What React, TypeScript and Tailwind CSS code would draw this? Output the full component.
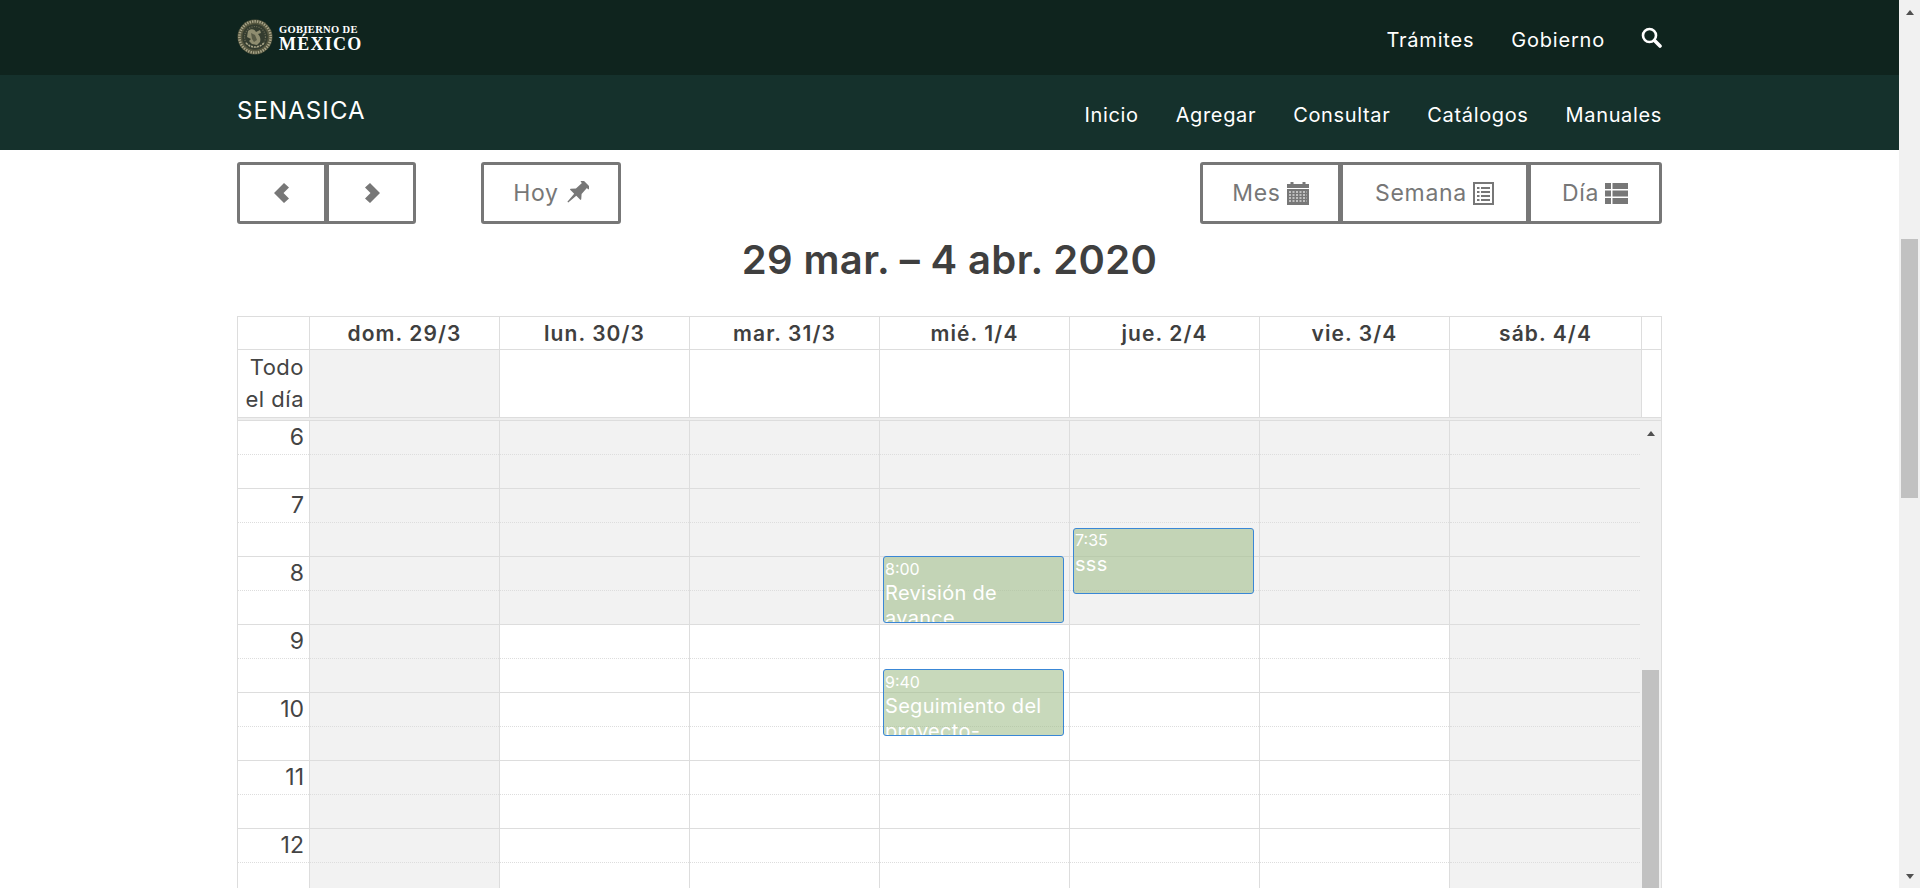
const font = "font-['Inter','Liberation_Sans',sans-serif]";

const hours = ["6", "7", "8", "9", "10", "11", "12"];
const days = ["dom. 29/3", "lun. 30/3", "mar. 31/3", "mié. 1/4", "jue. 2/4", "vie. 3/4", "sáb. 4/4"];

function Emblem() {
  return (
    <svg width="36" height="36" viewBox="0 0 36 36">
      <circle cx="18" cy="18" r="17.5" fill="#55563f" />
      <circle cx="18" cy="18" r="15.6" fill="none" stroke="#a8a488" strokeWidth="2.6" strokeDasharray="1.4 1.1" />
      <circle cx="18" cy="18" r="12.8" fill="#343c2f" />
      <circle cx="18" cy="18" r="10.5" fill="none" stroke="#6f6f58" strokeWidth="1.2" strokeDasharray="1 1.4" />
      <path d="M11 12c3-3 7-2 8 1l4-2 1 3-3 1c2 2 3 5 2 8l-3 3-5-1-3-3 2-2-4-2z" fill="#8f8d70" />
      <path d="M14 14l4 2 2 5-3 2-2-3z" fill="#5a5c47" />
      <path d="M9 24c3 3 6 4 9 4s6-1 9-4" fill="none" stroke="#a8a488" strokeWidth="1.6" strokeDasharray="2 1" />
    </svg>
  );
}

function Chevron({ left }: { left?: boolean }) {
  return (
    <svg width="15" height="20" viewBox="0 0 15 20" fill="#777777" className={left ? "mr-[2px]" : "ml-[2px]"}>
      {left ? <path d="M10 0 L15 4.5 L9.5 10 L15 15.5 L10 20 L0 10 Z" /> : <path d="M5 0 L0 4.5 L5.5 10 L0 15.5 L5 20 L15 10 Z" />}
    </svg>
  );
}

function Pin() {
  return (
    <svg width="24" height="24" viewBox="0 0 24 24" fill="#777777">
      <g transform="rotate(45 12 12)">
        <path d="M6.5 -1.5h11v3h-2l0.5 8 3.5 4v1h-6l-0.9 10.5h-1.2L10.5 14.5h-6v-1l3.5-4 0.5-8h-2z" />
      </g>
    </svg>
  );
}

function Calendar() {
  return (
    <svg width="22" height="23" viewBox="0 0 22 23">
      <path d="M0 2h3.5V0h3v2h9V0h3v2H22v4H0z" fill="#777777" />
      <rect y="7" width="22" height="16" fill="#777777" />
      <path d="M2 10h18M2 13h18M2 16h18M2 19h18" stroke="#d8d8d8" strokeWidth="1.4" strokeDasharray="2 1.5" />
    </svg>
  );
}

function ListAlt() {
  return (
    <svg width="21" height="23" viewBox="0 0 21 23">
      <rect x="1" y="1" width="19" height="21" fill="#fff" stroke="#777777" strokeWidth="2" />
      <path d="M4 6h2.5M8 6h9M4 10h2.5M8 10h9M4 14h2.5M8 14h9M4 18h2.5M8 18h9" stroke="#777777" strokeWidth="2" />
    </svg>
  );
}

function ThList() {
  return (
    <svg width="23" height="21" viewBox="0 0 23 21" fill="#777777">
      <path d="M0 0h6v6H0zM7.5 0H23v6H7.5zM0 7.5h6v6H0zM7.5 7.5H23v6H7.5zM0 15h6v6H0zM7.5 15H23v6H7.5z" />
    </svg>
  );
}

function Search() {
  return (
    <svg width="21" height="21" viewBox="0 0 21 21" fill="none" stroke="#ffffff">
      <circle cx="8.5" cy="8.5" r="6.5" strokeWidth="2.6" />
      <path d="M13.5 13.5l5.5 5.5" strokeWidth="3.6" strokeLinecap="round" />
    </svg>
  );
}

function Event({ time, title, className }: { time: string; title: string; className: string }) {
  return (
    <div className={`absolute overflow-hidden rounded-[3px] border border-[#3a87d6] bg-[#a3bf8e]/60 px-[1px] text-white ${className}`}>
      <div className="text-[16px] leading-[23px]">{time}</div>
      <div className="text-[20px] leading-[25px] tracking-[0.3px]">{title}</div>
    </div>
  );
}

function Topbar() {
  return (
    <div className="h-[75px] bg-[#0f241e] flex items-center justify-between pl-[237px] pr-[237px]">
      <div className="flex items-center gap-[6px] mt-[-1px]">
        <Emblem />
        <div className="font-['Liberation_Serif',serif] font-bold text-white">
          <div className="text-[10.5px] leading-[11px] tracking-[0.35px]">GOBIERNO DE</div>
          <div className="text-[18px] leading-[13px] mt-[3px] tracking-[1.25px]">MÉXICO</div>
        </div>
      </div>
      <div className="flex items-center gap-[37px] text-[20px] text-white">
        <span className="tracking-[0.8px] mt-[4px]">Trámites</span>
        <span className="tracking-[0.8px] mt-[4px]">Gobierno</span>
        <span className="ml-[-1px] mt-[0px]"><Search /></span>
      </div>
    </div>
  );
}

function Navbar() {
  return (
    <div className="h-[75px] bg-[#15312c] flex justify-between pl-[237px] pr-[237px] text-white">
      <span className="text-[24px] leading-[72px] tracking-[1.1px]">SENASICA</span>
      <div className="flex gap-[37px] text-[20px] leading-[80px] tracking-[0.65px]">
        <span>Inicio</span>
        <span>Agregar</span>
        <span>Consultar</span>
        <span>Catálogos</span>
        <span>Manuales</span>
      </div>
    </div>
  );
}

const btn = "flex items-center justify-center gap-[6px] h-[62px] bg-white border-[3px] border-[#777777] text-[23px] tracking-[0.7px] text-[#777777]";

function Toolbar() {
  return (
    <div className="flex justify-between h-[62px] mt-[12px]">
      <div className="flex">
        <div className="flex">
          <div className={`${btn} w-[90px] rounded-l-[3px]`}><Chevron left /></div>
          <div className={`${btn} w-[90px] ml-[-1px] rounded-r-[3px]`}><Chevron /></div>
        </div>
        <div className={`${btn} w-[140px] ml-[65px] rounded-[3px]`}>Hoy <Pin /></div>
      </div>
      <div className="flex">
        <div className={`${btn} w-[141px] rounded-l-[3px]`}>Mes <Calendar /></div>
        <div className={`${btn} w-[189px] ml-[-1px]`}>Semana <ListAlt /></div>
        <div className={`${btn} w-[134px] ml-[-1px] rounded-r-[3px]`}>Día <ThList /></div>
      </div>
    </div>
  );
}

function Calendario() {
  const colLine = "border-r border-[#dddddd]";
  const gridCols = "grid grid-cols-[72px_repeat(6,190px)_192px_1fr]";
  return (
    <div className="mt-[32px] border-x border-t border-[#dddddd]">
      <div className={`${gridCols} h-[33px] border-b border-[#dddddd] text-[21px] tracking-[1.1px] font-semibold text-[#3f3f3f] leading-[33px] text-center`}>
        <div className={colLine} />
        {days.map((d) => (
          <div key={d} className={colLine}>{d}</div>
        ))}
        <div />
      </div>
      <div className={`${gridCols} h-[68px] border-b border-[#dddddd]`}>
        <div className={`${colLine} pr-[5px] pt-[1px] text-right text-[22px] tracking-[0.5px] leading-[32px] text-[#444444]`}>Todo<br />el día</div>
        {days.map((d, i) => (
          <div key={d} className={`${colLine} ${i === 0 || i === 6 ? "bg-[#f2f2f2]" : ""}`} />
        ))}
        <div />
      </div>
      <div className="h-[3px] bg-[#eeeeee] border-b border-[#dddddd]" />
      <div className={`${gridCols} relative`}>
        <div className={colLine}>
          {hours.map((h) => (
            <div key={h} className="h-[68px] border-b border-[#dddddd]">
              <div className="h-[34px] border-b border-dotted border-[#dddddd] pr-[5px] text-right text-[23px] leading-[33px] text-[#444444]">{h}</div>
            </div>
          ))}
        </div>
        {days.map((d, i) => (
          <div key={d} className={i === 6 ? "pr-[2px] bg-[#f1f1f1]" : colLine}>
            {hours.map((h, j) => (
              <div key={h} className={`h-[68px] border-b border-[#dddddd] ${i === 0 || i === 6 || j < 3 ? "bg-[#f2f2f2]" : ""}`}>
                <div className="h-[34px] border-b border-dotted border-[#dddddd]" />
              </div>
            ))}
          </div>
        ))}
        <div className="bg-[#f1f1f1] flex flex-col items-center pr-[2px]">
          <div className="mt-[10px] w-0 h-0 border-x-[4.5px] border-x-transparent border-b-[5px] border-b-[#505050]" />
          <div className="mt-[234px] w-[17px] h-[300px] bg-[#c1c1c1]" />
        </div>
        <Event time="8:00" title="Revisión de avance" className="left-[645px] top-[135px] w-[181px] h-[67px] pt-[1px]" />
        <Event time="7:35" title="sss" className="left-[835px] top-[107px] w-[181px] h-[66px]" />
        <Event time="9:40" title="Seguimiento del proyecto-" className="left-[645px] top-[248px] w-[181px] h-[67px] pt-[1px]" />
      </div>
    </div>
  );
}

function App() {
  return (
    <div className={`${font} h-[888px] w-[1920px] overflow-hidden flex bg-white`}>
      <div className="w-[1899px] shrink-0 overflow-hidden">
        <Topbar />
        <Navbar />
        <div className="ml-[237px] w-[1425px]">
          <Toolbar />
          <h2 className="mt-[12px] text-center text-[40px] leading-[48px] font-semibold text-[#3f3f3f] tracking-[0.37px]">29 mar. – 4 abr. 2020</h2>
          <Calendario />
        </div>
      </div>
      <div className="w-[21px] h-[888px] bg-[#f1f1f1] flex flex-col items-center">
        <div className="mt-[10px] w-0 h-0 border-x-[4.5px] border-x-transparent border-b-[5px] border-b-[#505050]" />
        <div className="mt-[224px] w-[17px] h-[259px] bg-[#c1c1c1]" />
        <div className="mt-auto mb-[9px] w-0 h-0 border-x-[4.5px] border-x-transparent border-t-[5px] border-t-[#505050]" />
      </div>
    </div>
  );
}

export default App;
